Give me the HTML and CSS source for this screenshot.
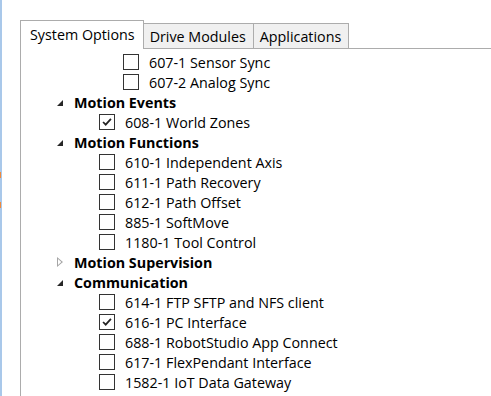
FILE: index.html
```html
<!DOCTYPE html>
<html>

<head>
  <meta charset="utf-8" />
  <title>System Options</title>
  <link rel="stylesheet" href="styles.css">
</head>

<body>
  <div class="window">
    <div class="edge">
      <span class="mark first"></span>
      <span class="mark"></span>
    </div>
    <div class="tab-control">
      <div class="tab-strip">
        <div class="tab active">System Options</div>
        <div class="tab">Drive Modules</div>
        <div class="tab">Applications</div>
      </div>
      <div class="tab-panel">
        <div class="row opt deep"><span class="box"></span>607-1 Sensor Sync</div>
        <div class="row opt deep"><span class="box"></span>607-2 Analog Sync</div>

        <div class="row group"><span class="expander open"></span>Motion Events</div>
        <div class="row opt"><span class="box checked"><svg viewBox="0 0 16 16"><polyline points="3.5,8 6.5,11 12.5,4.5" /></svg></span>608-1 World Zones</div>

        <div class="row group"><span class="expander open"></span>Motion Functions</div>
        <div class="row opt"><span class="box"></span>610-1 Independent Axis</div>
        <div class="row opt"><span class="box"></span>611-1 Path Recovery</div>
        <div class="row opt"><span class="box"></span>612-1 Path Offset</div>
        <div class="row opt"><span class="box"></span>885-1 SoftMove</div>
        <div class="row opt"><span class="box"></span>1180-1 Tool Control</div>

        <div class="row group"><span class="expander closed"></span>Motion Supervision</div>

        <div class="row group"><span class="expander open"></span>Communication</div>
        <div class="row opt"><span class="box"></span>614-1 FTP SFTP and NFS client</div>
        <div class="row opt"><span class="box checked"><svg viewBox="0 0 16 16"><polyline points="3.5,8 6.5,11 12.5,4.5" /></svg></span>616-1 PC Interface</div>
        <div class="row opt"><span class="box"></span>688-1 RobotStudio App Connect</div>
        <div class="row opt"><span class="box"></span>617-1 FlexPendant Interface</div>
        <div class="row opt"><span class="box"></span>1582-1 IoT Data Gateway</div>
      </div>
    </div>
  </div>
</body>

</html>
```

FILE: styles.css
```css
body {
  margin: 0;
  padding: 0;
  background-color: #ffffff;
  font-family: "Open Sans", "Noto Sans", sans-serif;
  font-size: 14.3px;
  color: #000000;
  overflow: hidden;
}

.window {
  display: flex;
  height: 396px;
}

.edge {
  width: 2px;
  display: flex;
  flex-direction: column;
  background-color: #a9c8ea;
}

.edge .mark {
  display: block;
  width: 1px;
  height: 6px;
  margin-top: 24px;
  background-color: #f08a3c;
}

.edge .mark.first {
  margin-top: 172px;
}

.tab-control {
  flex: 1;
  display: flex;
  flex-direction: column;
  margin-left: 18px;
  padding-top: 20px;
}

.tab-strip {
  display: flex;
  align-items: flex-end;
  height: 28px;
  border-bottom: 1px solid #acacac;
}

.tab {
  box-sizing: border-box;
  height: 25px;
  padding: 0 7px 0 6px;
  display: flex;
  align-items: center;
  background-color: #f0f0f0;
  border: 1px solid #acacac;
  border-bottom: none;
  margin-left: -1px;
  white-space: nowrap;
}

.tab.active {
  height: 29px;
  margin-left: 0;
  margin-bottom: -1px;
  padding: 0 8px 1px 9px;
  background-color: #ffffff;
  position: relative;
  z-index: 1;
}

.tab-panel {
  flex: 1;
  border-left: 1px solid #acacac;
  padding-top: 3px;
}

.row {
  height: 20px;
  display: flex;
  align-items: center;
  white-space: nowrap;
}

.row.group {
  padding-left: 31px;
  font-weight: bold;
}

.row.opt {
  padding-left: 78px;
}

.row.opt.deep {
  padding-left: 102px;
}

.expander {
  width: 16px;
  height: 16px;
  margin-right: 6px;
  display: flex;
  align-items: center;
  justify-content: center;
}

.expander.open::before {
  content: "";
  width: 0;
  height: 0;
  border-left: 6px solid transparent;
  border-bottom: 6px solid #262626;
  margin-top: 1px;
}

.expander.closed::before {
  content: "";
  width: 6px;
  height: 10px;
  background-color: #a6a6a6;
  clip-path: polygon(0 0, 100% 50%, 0 100%, 0 0, 1px 2px, 1px 8px, 4.3px 5px, 1px 2px);
}

.box {
  box-sizing: border-box;
  width: 16px;
  height: 16px;
  margin-right: 10px;
  border: 1px solid #333333;
  background-color: #ffffff;
  display: flex;
}

.box svg {
  width: 14px;
  height: 14px;
}

.box svg polyline {
  fill: none;
  stroke: #222222;
  stroke-width: 2;
}
```
